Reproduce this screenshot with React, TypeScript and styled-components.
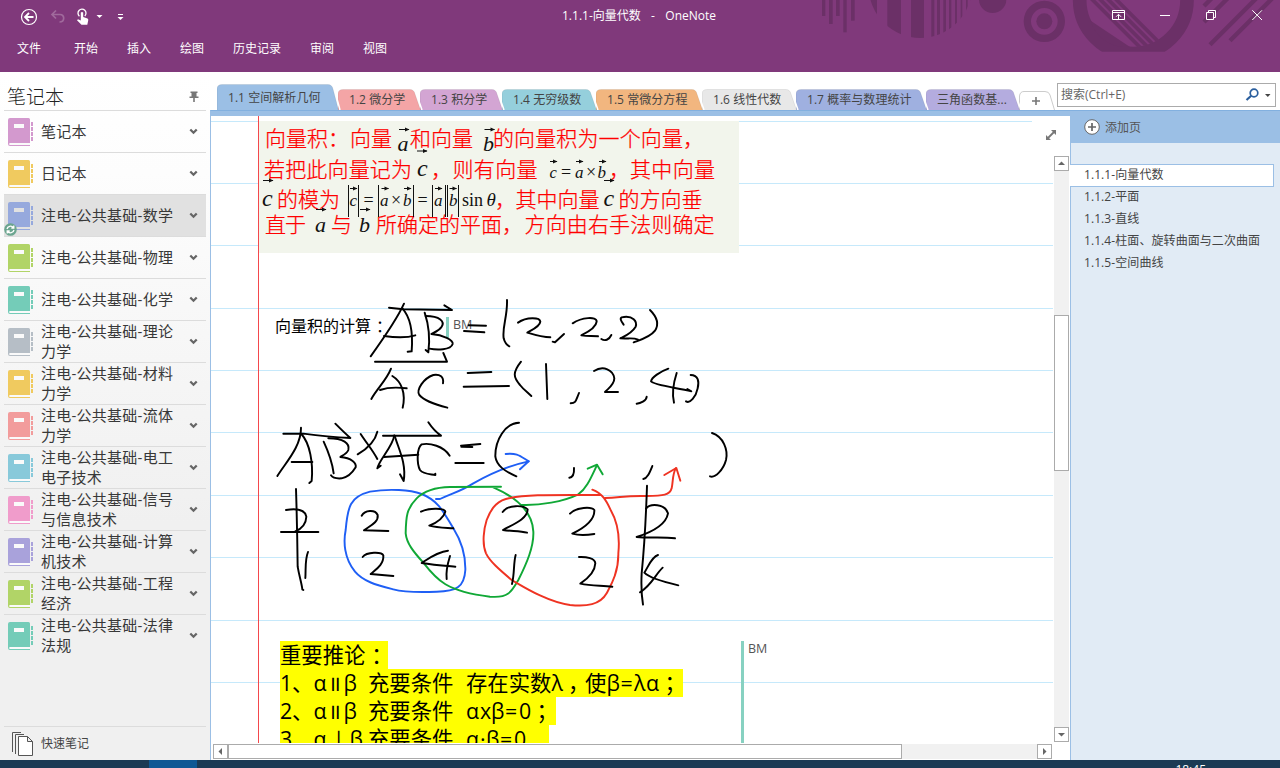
import React from "react";
import styled, { createGlobalStyle } from "styled-components";

const GlobalStyle = createGlobalStyle`
  * { box-sizing: border-box; }
  body { margin: 0; background: #fff; overflow: hidden; }
  body, svg text { font-family: "Open Sans", "Noto Sans CJK SC", sans-serif; }
`;

const BLUE = "#9bbfe5";
const SERIF = '"Liberation Serif", serif';

const Window = styled.div`
  display: flex;
  flex-direction: column;
  width: 1280px;
  height: 768px;
  overflow: hidden;
  background: #fff;
  color: #444;
  font-size: 12px;
`;

/* ---------- title bar ---------- */

const TitleBar = styled.header`
  position: relative;
  flex: none;
  height: 72px;
  background: #80397b;
  color: #fff;
`;

const TitleArt = styled.svg`
  position: absolute;
  left: 800px;
  top: 0;
`;

const TitleRow = styled.div`
  position: relative;
  display: grid;
  grid-template-columns: 1fr auto 1fr;
  align-items: center;
  height: 32px;
  padding: 0 2px 0 0;
`;

const Caption = styled.div`
  font-size: 12px;
  line-height: 16px;
  white-space: pre;
  width: 154px;
  display: flex;
  justify-content: space-between;
  padding-bottom: 1px;
`;

const QuickTools = styled.div`
  display: flex;
`;

const WindowButtons = styled.div`
  display: flex;
  justify-content: flex-end;
  margin-right: 1px;
`;

const RibbonTabs = styled.nav`
  position: relative;
  display: flex;
  gap: 29px;
  padding: 8px 0 0 17px;
  line-height: 18px;
  font-size: 12px;

  span:first-child {
    margin-right: 4px;
  }
`;

/* ---------- body ---------- */

const Body = styled.div`
  display: flex;
  height: 688px;
`;

const Sidebar = styled.aside`
  display: flex;
  flex-direction: column;
  width: 210px;
  padding: 8px 4px 0;
  background: linear-gradient(#fff 0, #fdfdfd 100px, #f0f0f0 450px, #f0f0f0);
`;

const SidebarHead = styled.div`
  display: flex;
  align-items: center;
  justify-content: space-between;
  height: 31px;
  padding: 4px 7px 0 3px;
  border-bottom: 1px solid #dcdcdc;
  font-size: 19px;
  font-weight: 300;
  line-height: 24px;
  color: #222;
`;

const NotebookRow = styled.div<{ $active?: boolean }>`
  display: flex;
  align-items: center;
  position: relative;
  height: 42px;
  width: 202px;
  padding: 0 8px 0 4px;
  border-bottom: 1px solid #dcdcdc;
  background: ${(p) => (p.$active ? "#e1e1e1" : "transparent")};

  &:nth-last-child(2) {
    border-bottom-color: transparent;
  }
`;

const NotebookName = styled.div`
  width: 136px;
  margin: -2px 12px 0 7px;
  font-size: 15px;
  line-height: 20px;
  letter-spacing: 0.25px;
  color: #383838;
`;

const SyncBadge = styled.svg`
  position: absolute;
  left: 0;
  bottom: 0;
`;

const QuickNotes = styled.div`
  display: flex;
  align-items: center;
  gap: 8px;
  height: 34px;
  margin-top: auto;
  padding-left: 8px;
  border-top: 1px solid #dcdcdc;

  span {
    margin-top: -2px;
  }
`;

const Main = styled.section`
  display: flex;
  flex-direction: column;
  width: 1070px;
`;

const TabStrip = styled.div`
  display: flex;
  align-items: flex-end;
  height: 38px;
  padding-left: 7px;
`;

const SectionTabBox = styled.div<{ $w: number; $active?: boolean; $z: number }>`
  position: relative;
  z-index: ${(p) => p.$z};
  width: ${(p) => p.$w}px;
  height: ${(p) => (p.$active ? 26 : 21)}px;
  padding: ${(p) => (p.$active ? "5px 0 0 11px" : "2px 0 0 11px")};
  line-height: 17px;
  letter-spacing: 0.05px;
  color: #444;
  white-space: pre;

  svg {
    position: absolute;
    left: 0;
    bottom: 0;
    z-index: -1;
  }
`;

const SearchBox = styled.div`
  display: flex;
  align-items: center;
  justify-content: space-between;
  width: 219px;
  height: 24px;
  margin: 0 0 3px 2px;
  padding: 0 4px 3px 3px;
  border: 1px solid #ababab;
  color: #666;
`;

const Workspace = styled.div`
  display: flex;
  height: 650px;
  border-top: 1px solid #82b0df;
  border-left: 1px solid ${BLUE};
`;

const Editor = styled.div`
  display: flex;
  flex-direction: column;
  width: 859px;
  border-top: 5px solid ${BLUE};
`;

const EditorTop = styled.div`
  display: flex;
  height: 627px;
`;

const Paper = styled.div`
  position: relative;
  width: 843px;
  overflow: hidden;
  background: #fff;
`;

const PaperArt = styled.svg`
  position: absolute;
  left: 0;
  top: 0;
`;

const ExpandIcon = styled.svg`
  position: absolute;
  z-index: 2;
  left: -9px;
  top: 13px;
`;

const VScroll = styled.div`
  position: relative;
  display: flex;
  flex-direction: column;
  width: 16px;
  padding: 40px 1px 1px 0;
`;

const ScrollButton = styled.div`
  display: flex;
  align-items: center;
  justify-content: center;
  flex: none;
  width: 15px;
  height: 15px;
  border: 1px solid #ababab;
  background: #fff;
`;

const VTrack = styled.div`
  flex: 1;
  padding-top: 144px;
  background: #f1f1f1;
`;

const VThumb = styled.div`
  height: 156px;
  border: 1px solid #ababab;
  background: #fff;
`;

const HScroll = styled.div`
  display: flex;
  height: 15px;
  margin: 1px 18px 0 2px;
`;

const HTrack = styled.div`
  flex: 1;
  background: #f1f1f1;
`;

const HThumb = styled.div`
  width: 675px;
  height: 15px;
  margin-left: -1px;
  border: 1px solid #ababab;
  border-left-width: 2px;
  background: #fff;
`;

/* free-floating note containers on the page */
const NoteBox = styled.div<{ $x: number; $y: number }>`
  position: absolute;
  left: ${(p) => p.$x}px;
  top: ${(p) => p.$y}px;
`;

const NoteTitle = styled.div`
  font-size: 16px;
  line-height: 22px;
  color: #000;
  white-space: pre;
`;

const MarkerLabel = styled.div<{ $h: number }>`
  height: ${(p) => p.$h}px;
  padding-left: 4px;
  border-left: 3px solid #87d1c1;
  font-size: 12.5px;
  line-height: 16px;
  color: #555;
`;

const Highlight = styled.div<{ $w: number }>`
  display: flex;
  width: ${(p) => p.$w}px;
  height: 28px;
  background: #ff0;
  color: #000;
  font-size: 21.33px;
  line-height: 28px;
  white-space: pre;
`;

const Seg = styled.span<{ $w: number }>`
  flex: none;
  width: ${(p) => p.$w}px;
`;

const Mark = styled.span<{ $shift: number }>`
  flex: none;
  width: 21.5px;
  padding-left: ${(p) => p.$shift}px;
`;

const PagePane = styled.div`
  width: 210px;
  border-left: 1px solid ${BLUE};
  background: #e1ebf5;
`;

const AddPage = styled.div`
  display: flex;
  align-items: center;
  gap: 5px;
  height: 32px;
  padding-left: 13px;
  background: ${BLUE};
  color: #555;
`;

const PageList = styled.div`
  padding-top: 21px;
`;

const PageItem = styled.div<{ $active?: boolean }>`
  width: ${(p) => (p.$active ? 204 : 203)}px;
  height: ${(p) => (p.$active ? 23 : 22)}px;
  margin: ${(p) => (p.$active ? "0 0 -1px -1px" : "0")};
  padding-left: ${(p) => (p.$active ? 14 : 13)}px;
  border: ${(p) => (p.$active ? `1px solid ${BLUE}` : "0")};
  border-left: 0;
  background: ${(p) => (p.$active ? "#fff" : "transparent")};
  line-height: ${(p) => (p.$active ? 20 : 22)}px;
  letter-spacing: 0.08px;
  color: #444;
  white-space: nowrap;
`;

const Taskbar = styled.footer`
  display: flex;
  justify-content: space-between;
  height: 8px;
  padding: 0 74px 0 149px;
  overflow: hidden;
  background: #1b3a54;
  color: #fff;
`;

const TaskActive = styled.div`
  width: 48px;
  height: 8px;
  background: #0f5894;
`;

const Clock = styled.div`
  padding-top: 2px;
  font-size: 12px;
  line-height: 15px;
`;

/* ---------- small drawings ---------- */

function BannerArt() {
  const bars: [number, number, number][] = [
    [66, 10, 48], [87, 11, 72], [108, 11, 48], [130, 10, 97], [153, 11, 62],
  ];
  const stripes: [number, number][] = [
    [200, 31], [262, 41], [333, 39], [394, 9], [411, 9], [430, 8], [447, 7], [465, 6], [482, 5], [498, 5], [510, 4],
  ];
  return (
    <TitleArt width="480" height="72" viewBox="0 0 1440 216" fill="#6b3067">
      <defs>
        <clipPath id="disc"><circle cx="361" cy="-41" r="155" /></clipPath>
        <clipPath id="strip"><rect width="1440" height="155" /></clipPath>
        <clipPath id="inner"><circle cx="1000" cy="0" r="141" /></clipPath>
      </defs>
      {bars.map(([x, w, h]) => <rect key={x} x={x} width={w} height={h} />)}
      <g clipPath="url(#disc)">
        {stripes.map(([x, w]) => <rect key={x} x={x} width={w} height="120" />)}
      </g>
      <circle cx="578" cy="-2" r="41" />
      <circle cx="733" cy="64" r="51" fill="none" stroke="#6b3067" strokeWidth="22" />
      <circle cx="733" cy="64" r="24" />
      <g clipPath="url(#strip)">
        <circle cx="1000" cy="0" r="161" fill="none" stroke="#6b3067" strokeWidth="41" />
        <g clipPath="url(#inner)" stroke="#6b3067" strokeWidth="11">
          <path d="M840,-38 L1026,148 M864,-38 L1050,148 M888,-38 L1074,148 M912,-38 L1098,148" />
        </g>
        <path d="M872,62 C885,110 930,145 990,141 Z" />
        <g stroke="#6b3067" strokeWidth="13">
          <path d="M1212,18 L1240,-10 M1212,66 L1290,-12 M1230,134 L1372,-8 M1290,122 L1420,-8" />
        </g>
      </g>
    </TitleArt>
  );
}

const ToolIcons = () => (
  <svg width="130" height="32" viewBox="0 0 130 32" fill="none" stroke="#fff">
    <circle cx="29" cy="17" r="7.5" strokeWidth="1.2" />
    <path d="M33.5 17H25.5M29 13L25 17L29 21" strokeWidth="1.8" />
    <path d="M52 14.5H60C65 14.5 65 22 59.5 22M56 10.5L52 14.5L56 18.5" stroke="#a06a9c" strokeWidth="1.7" />
    <path d="M79.4 16.2A4 4 0 1 1 84.8 16" strokeWidth="1.3" />
    <path d="M80.8 12.5Q82 11.3 83.2 12.5V17L87.5 18.5Q88.6 19 88.2 20.5L87.3 24.8H81.5L77 20.2L78 19.2L80.8 20.5Z" fill="#fff" stroke="none" />
    <path d="M96.5 15H102.5L99.5 18Z" fill="#fff" stroke="none" />
    <path d="M118 14.5H123" />
    <path d="M117.5 17H123.5L120.5 20Z" fill="#fff" stroke="none" />
  </svg>
);

const WindowIcons = () => (
  <svg width="170" height="32" viewBox="1107 0 170 32" fill="none" stroke="#fff">
    <path d="M1112.5 10.5H1124.5V19.5H1112.5ZM1112.5 12.5H1124.5M1118.5 19V14.5M1116 16.8L1118.5 14.3L1121 16.8" />
    <path d="M1160 15.5H1170" />
    <path d="M1206.5 12.5H1213.5V19.5H1206.5ZM1208.5 12V10.5H1215.5V17.5H1214" />
    <path d="M1252.3 10.3L1262 20M1262 10.3L1252.3 20" />
  </svg>
);

const BookIcon = ({ color, hole }: { color: string; hole: string }) => (
  <svg width="26" height="28" viewBox="0 0 26 28">
    <path d="M2 0H20.5Q22 0 22 1.5V25H2.5Q1.5 25 1.5 26Q1.5 27 2.5 27H22V28H2Q0 28 0 26V2Q0 0 2 0Z" fill={color} />
    <rect x="1.5" y="25" width="20.5" height="2" fill={hole} />
    <rect x="6" y="6" width="10" height="4" fill={hole} />
    <path d="M24 4V24" stroke={color} strokeWidth="2" strokeDasharray="4 1" />
  </svg>
);

const Chevron = () => (
  <svg width="9" height="8" viewBox="0 0 9 8">
    <path d="M1.300 1.500L4.500 4.700L7.700 1.500" fill="none" stroke="#666" strokeWidth="2.300" />
  </svg>
);

const PinIcon = () => (
  <svg width="10" height="12" viewBox="0 0 10 12">
    <path d="M1.5 0.5H8.500V2H7.500V5.500H9.500V7H0.500V5.500H2.500V2H1.500Z M4.200 7H5.800V11H4.200Z" fill="#777" />
  </svg>
);

const Arrow = ({ dir }: { dir: "up" | "down" | "left" | "right" }) => {
  const d = { up: "M1 6L4.500 2.500L8 6Z", down: "M1 3L4.500 6.500L8 3Z", left: "M6 1V8L2.500 4.500Z", right: "M3 1V8L6.500 4.500Z" }[dir];
  return <svg width="9" height="9"><path d={d} fill="#666" /></svg>;
};

function SectionTab({ w, color, active, z, children }: { w: number; color: string; active?: boolean; z: number; children: React.ReactNode }) {
  const h = active ? 26 : 21;
  const top = 0.5;
  const shape = `M0,${h} V5 Q0,${top} 5,${top} H${w - 10} Q${w - 6},${top} ${w - 5},5 L${w + 0.5},${h}`;
  return (
    <SectionTabBox $w={w} $active={active} $z={z}>
      <svg width={w + 3} height={h}>
        <path d={`M${w - 8},1 Q${w - 4},1.5 ${w - 3.5},5 L${w + 2},${h}`} fill="none" stroke="#fff" strokeWidth="1.5" />
        <path d={shape} fill={color} />
        <path d={shape} fill="none" stroke="rgba(0,0,0,0.07)" />
      </svg>
      {children}
    </SectionTabBox>
  );
}

/* ---------- pasted lecture slide ---------- */

function Vec({ x, y, ch, ax, ay, size = 22 }: { x: number; y: number; ch: string; ax: number; ay: number; size?: number }) {
  const len = size > 20 ? 10 : 7;
  return (
    <g>
      <text x={x} y={y} fontSize={size} fontStyle="italic" fill="#111" style={{ fontFamily: SERIF }}>{ch}</text>
      <path d={`M${ax},${ay}H${ax + len}`} stroke="#111" />
      <path d={`M${ax + len - 4},${ay - 2}L${ax + len + 0.5},${ay}L${ax + len - 4},${ay + 2}Z`} fill="#111" />
    </g>
  );
}

const slideText: [number, number, string, number][] = [
  [265, 146, "向量积：", 84],
  [350, 146, "向量", 42],
  [410, 146, "和向量", 63],
  [493, 146, "的向量积为一个向量，", 211],
  [264, 177, "若把此向量记为", 148],
  [431, 177, "，", 21],
  [452.5, 177, "则有向量", 85],
  [609, 177, "，", 21],
  [630, 177, "其中向量", 85],
  [277, 207, "的模为", 63],
  [495, 207, "，", 21],
  [515.5, 207, "其中向量", 84],
  [618.5, 207, "的方向垂", 84],
  [265, 232, "直于", 41],
  [331, 232, "与", 21],
  [376, 232, "所确定的平面，", 147],
  [524.5, 232, "方向由右手法则确定", 190],
];

const MathText = styled.text`
  && {
    font-family: ${SERIF};
  }
`;

function Slide() {
  return (
    <g>
      <rect x="259" y="121" width="480" height="132" fill="#f2f5ec" />
      <g fill="#ff0000" fontSize="21" fontWeight="300" stroke="#ff0000" strokeWidth="0.25">
        {slideText.map(([x, y, t, w]) => (
          <text key={`${x}-${y}`} x={x} y={y} textLength={w}>{t}</text>
        ))}
      </g>
      <Vec x={397.5} y={151} ch="a" ax={399} ay={129.5} />
      <Vec x={483} y={151} ch="b" ax={484.5} ay={129.5} />
      <Vec x={417} y={176} ch="c" ax={417} ay={151} size={24} />
      <Vec x={262} y={206} ch="c" ax={263} ay={180.5} size={24} />
      <Vec x={603.5} y={206} ch="c" ax={604} ay={180.5} size={24} />
      <Vec x={315} y={232} ch="a" ax={316} ay={209.5} />
      <Vec x={359} y={232} ch="b" ax={360} ay={209.5} />
      <Vec x={549.5} y={178} ch="c" ax={550} ay={161.5} size={16.5} />
      <Vec x={575} y={178} ch="a" ax={576} ay={161.5} size={17} />
      <Vec x={597.5} y={178} ch="b" ax={599} ay={161.5} size={17} />
      <Vec x={349.5} y={206} ch="c" ax={350} ay={188.5} size={17} />
      <Vec x={380} y={206} ch="a" ax={381.5} ay={188.5} size={17} />
      <Vec x={403} y={206} ch="b" ax={404} ay={188.5} size={17} />
      <Vec x={434} y={206} ch="a" ax={435} ay={188.5} size={17} />
      <Vec x={449} y={206} ch="b" ax={449.5} ay={188.5} size={17} />
      <g fill="#111" fontSize="18">
        <MathText x="561" y="178">=</MathText>
        <MathText x="586" y="178">×</MathText>
        <MathText x="363.5" y="206">=</MathText>
        <MathText x="391" y="206">×</MathText>
        <MathText x="417.5" y="206">=</MathText>
        <MathText x="462" y="206" textLength="21">sin</MathText>
        <MathText x="486.5" y="206" fontStyle="italic" fontSize="19">θ</MathText>
      </g>
      <path d="M348.5,185V217M358.5,185V217M378.5,185V217M413.5,185V217M432.5,185V217M445.5,185V217M447.5,185V217M458.5,185V217" stroke="#111" />
    </g>
  );
}

/* ---------- pen strokes ---------- */

const inkA = [
  "M387,53 L430,58 L576,60 L553,46",
  "M432,41 C410,90 360,160 332,199",
  "M427,55 C450,80 460,120 455,184 L443,185",
  "M372,138 C400,142 440,144 466,136",
  "M494,68 C508,110 510,150 505,187 L497,180",
  "M497,78 C540,78 555,95 545,110 C535,125 520,128 514,132 C550,135 580,150 578,162 C572,181 530,180 508,176",
  "M626,106 L678,107 M612,123 L673,127",
  "M345,215 L561,215 L550,189",
  "M393,236 C380,270 350,297 334,327",
  "M397,258 C425,275 438,310 428,353",
  "M360,300 C380,293 415,292 440,295",
  "M549,280 C552,260 540,252 520,255 C490,265 468,300 478,315 C495,335 530,345 562,353",
  "M70,431 L130,431 C180,438 220,442 271,444 C255,430 240,415 226,401",
  "M123,413 C124,470 75,520 52,558",
  "M124,432 C150,460 160,520 155,573 L148,579",
  "M95,516 L157,516",
  "M191,455 C205,485 217,520 221,550",
  "M205,445 C250,445 270,460 265,480 C260,492 245,498 241,501 C275,503 290,520 287,532 C275,552 262,562 245,565 C232,566 218,564 213,556",
  "M302,432 C320,460 338,480 352,507",
  "M352,425 C345,455 315,480 293,493",
  "M369,437 L543,437 C525,425 515,412 505,397",
  "M403,436 C398,470 357,510 352,535 L362,527",
  "M405,440 C415,475 440,520 431,573 L420,553",
  "M372,501 L475,494",
  "M569,497 C550,468 510,458 485,463 C470,475 470,520 480,540 C490,553 510,552 526,555 L526,551",
  "M603,467 L661,462 M604,470 L637,471 M586,519 L671,519",
];

const inkB = [
  "M201,30 C203,80 186,110 191,145 C194,157 200,165 208,169",
  "M234,98 C260,80 300,82 301,95 C300,110 275,120 262,128 C285,135 310,142 331,142",
  "M372,132 L345,157 L338,155",
  "M398,100 C425,82 470,78 470,95 C468,115 440,128 424,136 C445,139 458,137 474,139",
  "M514,135 C507,150 495,154 484,147",
  "M551,104 C545,95 538,86 545,82 C580,75 592,95 587,110 C575,130 555,138 541,145 C565,147 580,142 594,149",
  "M630,60 C655,85 656,105 645,122 C630,142 600,150 581,157",
  "M83,249 L154,246 M71,290 L207,288",
  "M243,215 C217,248 220,262 240,285 C250,298 260,305 274,318",
  "M318,222 L322,327",
  "M417,309 C407,333 408,340 392,340",
  "M462,243 C490,225 520,240 523,265 C523,285 505,295 495,306 L534,306",
  "M620,320 C620,332 600,340 590,341",
  "M685,236 C660,245 635,262 633,274 C640,285 700,292 754,304 L742,297",
  "M710,249 C700,280 695,310 702,338",
  "M752,255 C775,255 778,275 773,295 C768,320 750,342 738,334",
  "M237,398 C195,400 165,450 166,500 C170,528 195,544 229,559",
  "M816,429 C850,440 865,480 858,510 C850,540 825,565 810,559",
  "M402,534 C403,552 398,562 388,563",
  "M637,528 C628,550 622,565 610,567",
];

const inkC = [
  "M108,57 C110,120 112,200 113,290 C118,320 125,340 127,358 L130,360",
  "M78,120 C110,115 135,118 139,140 C138,165 120,178 106,184",
  "M63,186 L175,186",
  "M144,246 C134,270 138,300 136,324",
  "M305,137 C315,120 345,118 353,135 C357,158 325,170 312,181 L385,183",
  "M308,261 C320,245 365,245 370,256 C372,285 345,300 332,312 L400,318",
  "M483,125 C510,112 555,115 556,125 C550,145 525,160 508,167 C530,173 550,173 580,175",
  "M564,242 C530,245 500,270 485,279 C520,285 550,287 586,290",
  "M570,258 C560,290 558,310 560,327",
];

const inkD = [
  "M128,216 C145,193 190,195 203,208 C203,238 155,255 129,270 C155,274 180,272 201,278",
  "M167,345 C160,370 164,400 156,432",
  "M330,221 C350,200 395,200 403,210 C405,245 360,270 337,281 C360,288 385,285 403,282",
  "M357,351 C380,350 405,355 406,370 C405,395 385,415 361,431 C395,438 425,436 457,440",
  "M561,137 C558,230 553,320 545,400 C543,440 545,470 549,494",
  "M558,206 C570,190 615,190 624,220 C618,255 570,278 530,291 C570,295 605,290 645,295",
  "M594,345 C575,350 565,380 553,398 C570,415 620,428 655,436",
  "M608,383 C585,405 575,435 540,457",
];

const blueInk = [
  "M330,65 C390,55 450,60 485,72 C530,90 545,115 580,175 C605,215 617,255 616,300 C613,350 590,365 530,365 C480,367 430,366 400,358 C350,345 310,335 285,305 C252,265 250,215 257,180 C263,110 270,80 330,65 Z",
  "M528,87 L540,87 C580,68 600,65 640,40 C690,12 740,-12 806,-26",
  "M737,-48 C772,-52 780,-42 806,-26 L780,-2",
];

const greenInk = [
  "M723,50 L570,51 C520,52 490,65 470,85 C440,115 438,140 437,190 C440,220 460,245 490,278 C530,330 560,365 690,380 C745,385 755,365 775,330 C800,280 822,230 820,185 C818,130 775,85 700,52",
  "M785,105 C840,107 910,95 955,73 C980,55 992,25 1011,-15",
  "M983,-4 L1011,-16 L1028,13",
];

const redInk = [
  "M397,149 C430,162 440,185 452,210 C475,250 480,290 475,340 C476,400 450,440 440,460 C420,495 380,500 330,495 C260,485 190,440 155,420 C120,390 90,365 78,340 C65,310 72,265 80,240 C95,200 115,180 150,174 C200,163 280,165 420,165",
  "M435,174 C480,174 490,166 560,168 C610,168 630,165 635,145 C640,120 637,105 647,85",
  "M613,105 L649,84 L661,122",
];

function Ink({ paths, x, y, color = "#000" }: { paths: string[]; x: number; y: number; color?: string }) {
  return (
    <g transform={`translate(${x} ${y}) scale(0.333333)`} fill="none" stroke={color} strokeWidth="5.8" strokeLinecap="round" strokeLinejoin="round">
      {paths.map((d) => <path key={d} d={d} />)}
    </g>
  );
}

/* ---------- data ---------- */

const notebooks: [string, string][] = [
  ["笔记本", "#d399ce"],
  ["日记本", "#f0ca5f"],
  ["注电-公共基础-数学", "#96a9dd"],
  ["注电-公共基础-物理", "#b1d467"],
  ["注电-公共基础-化学", "#74ccb8"],
  ["注电-公共基础-理论力学", "#b6bec6"],
  ["注电-公共基础-材料力学", "#f0ca5f"],
  ["注电-公共基础-流体力学", "#f29c9c"],
  ["注电-公共基础-电工电子技术", "#88c9da"],
  ["注电-公共基础-信号与信息技术", "#f09ccb"],
  ["注电-公共基础-计算机技术", "#a9a2db"],
  ["注电-公共基础-工程经济", "#b1d467"],
  ["注电-公共基础-法律法规", "#74ccb8"],
];

const sections: [string, string, number][] = [
  ["1.1 空间解析几何", BLUE, 121],
  ["1.2 微分学", "#f4a5a6", 82],
  ["1.3 积分学", "#d3a5d3", 82],
  ["1.4 无穷级数", "#95cfdc", 94],
  ["1.5 常微分方程", "#f2b67f", 106],
  ["1.6 线性代数", "#e8e8e8", 94],
  ["1.7 概率与数理统计", "#9fb0e0", 130],
  ["三角函数基...", "#b4acdf", 93],
];

const pages = ["1.1.1-向量代数", "1.1.2-平面", "1.1.3-直线", "1.1.4-柱面、旋转曲面与二次曲面", "1.1.5-空间曲线"];
const ruleLines = [183.5, 245.5, 308.5, 370.5, 432.5, 495.5, 557.5, 620.5, 682.5];

export default function App() {
  return (
    <Window>
      <GlobalStyle />
      <TitleBar>
        <BannerArt />
        <TitleRow>
          <QuickTools><ToolIcons /></QuickTools>
          <Caption><span>1.1.1-向量代数</span><span>-</span><span>OneNote</span></Caption>
          <WindowButtons><WindowIcons /></WindowButtons>
        </TitleRow>
        <RibbonTabs>
          {["文件", "开始", "插入", "绘图", "历史记录", "审阅", "视图"].map((t) => <span key={t}>{t}</span>)}
        </RibbonTabs>
      </TitleBar>

      <Body>
        <Sidebar>
          <SidebarHead>笔记本<PinIcon /></SidebarHead>
          {notebooks.map(([name, color], i) => (
            <NotebookRow key={name} $active={i === 2}>
              <BookIcon color={color} hole={i === 2 ? "#e1e1e1" : "#fafafa"} />
              <NotebookName>{name}</NotebookName>
              <Chevron />
              {i === 2 && (
                <SyncBadge width="13" height="13" viewBox="0 0 13 13">
                  <circle cx="6.5" cy="6.5" r="6.3" fill="#6ba58f" />
                  <path d="M3 6A3.600 3.600 0 0 1 9.300 4.500M10 7A3.600 3.600 0 0 1 3.700 8.500M9.800 2.500V5H7.300M3.200 10.500V8H5.700" fill="none" stroke="#fff" strokeWidth="1.3" />
                </SyncBadge>
              )}
            </NotebookRow>
          ))}
          <QuickNotes>
            <svg width="21" height="24" viewBox="0 0 21 24" fill="none" stroke="#555">
              <path d="M0.500 20V0.500H9M3.500 22V2.500H12" />
              <path d="M6.500 4.500H15.500L20.500 9.500V23.500H6.500ZM15.500 4.500V9.500H20.500" fill="#fff" />
            </svg>
            <span>快速笔记</span>
          </QuickNotes>
        </Sidebar>

        <Main>
          <TabStrip>
            {sections.map(([name, color, w], i) => (
              <SectionTab key={name} w={w} color={color} active={i === 0} z={20 - i}>{name}</SectionTab>
            ))}
            <svg width="36" height="21" viewBox="0 0 36 21" fill="none">
              <path d="M0.500 21V7Q1 2.500 5 2.500H26Q30 2.500 31 6L35.500 21" stroke="#ccc" />
              <path d="M13 12H21M17 8V16" stroke="#777" strokeWidth="1.600" />
            </svg>
            <SearchBox>
              搜索(Ctrl+E)
              <svg width="26" height="14" viewBox="0 0 26 14">
                <circle cx="9" cy="6" r="3.800" fill="none" stroke="#2b5f9e" strokeWidth="1.700" />
                <path d="M6.200 8.800L1.500 13" stroke="#2b5f9e" strokeWidth="2.200" />
                <path d="M20 7H25.500L22.800 10Z" fill="#444" />
              </svg>
            </SearchBox>
          </TabStrip>

          <Workspace>
            <Editor>
              <EditorTop>
                <Paper>
                  <PaperArt width="843" height="627" viewBox="211 116 843 627">
                    <path d="M211,121.500H1032" stroke="#c6e9fb" />
                    <path d={ruleLines.map((y) => `M211,${y}H1053`).join("")} stroke="#c6e9fb" />
                    <Slide />
                    <path d="M258.500,116V743" stroke="#f4484c" />
                  </PaperArt>
                  <NoteBox $x={64} $y={199}>
                    <NoteTitle>向量积的计算<Mark $shift={5}>：</Mark></NoteTitle>
                  </NoteBox>
                  <NoteBox $x={235} $y={201}><MarkerLabel $h={21}>BM</MarkerLabel></NoteBox>
                  <NoteBox $x={69} $y={525}>
                    <Highlight $w={108}>重要推论<Mark $shift={6}>：</Mark></Highlight>
                    <Highlight $w={403}>
                      <Seg $w={12}>1</Seg><Seg $w={21.5}>、</Seg><Seg $w={14.5}>α</Seg><Seg $w={15.5}>॥</Seg><Seg $w={24.5}>β</Seg>
                      <Seg $w={98}>充要条件</Seg><Seg $w={85.5}>存在实数</Seg><Seg $w={12}>λ</Seg>
                      <Mark $shift={4.5}>，</Mark><Seg $w={21.5}>使</Seg><Seg $w={14}>β</Seg><Seg $w={13.5}>=</Seg><Seg $w={12}>λ</Seg><Seg $w={14}>α</Seg><Mark $shift={4.5}>；</Mark>
                    </Highlight>
                    <Highlight $w={276}>
                      <Seg $w={12}>2</Seg><Seg $w={21.5}>、</Seg><Seg $w={14.5}>α</Seg><Seg $w={15.5}>॥</Seg><Seg $w={24.5}>β</Seg>
                      <Seg $w={98}>充要条件</Seg><Seg $w={14}>α</Seg><Seg $w={11}>x</Seg><Seg $w={14}>β</Seg><Seg $w={14}>=</Seg><Seg $w={12}>0</Seg><Mark $shift={5.5}>；</Mark>
                    </Highlight>
                    <Highlight $w={269}>
                      <Seg $w={12}>3</Seg><Seg $w={21.5}>、</Seg><Seg $w={14.5}>α</Seg><Seg $w={21.5}>⊥</Seg><Seg $w={18.5}>β</Seg>
                      <Seg $w={98}>充要条件</Seg><Seg $w={14}>α</Seg><Seg $w={6}>·</Seg><Seg $w={14}>β</Seg><Seg $w={14}>=</Seg><Seg $w={12}>0</Seg>
                    </Highlight>
                  </NoteBox>
                  <NoteBox $x={530} $y={525}><MarkerLabel $h={110}>BM</MarkerLabel></NoteBox>
                  <PaperArt width="843" height="627" viewBox="211 116 843 627">
                    <Ink paths={blueInk} x={260} y={470} color="#1f5ff5" />
                    <Ink paths={greenInk} x={260} y={470} color="#10a836" />
                    <Ink paths={redInk} x={460} y={440} color="#ef3322" />
                    <Ink paths={inkA} x={260} y={290} />
                    <Ink paths={inkB} x={440} y={290} />
                    <Ink paths={inkC} x={260} y={470} />
                    <Ink paths={inkD} x={460} y={440} />
                  </PaperArt>
                </Paper>
                <VScroll>
                  <ExpandIcon width="12" height="12" viewBox="0 0 12 12">
                    <path d="M2 10L10 2" stroke="#777" strokeWidth="1.8" />
                    <path d="M6 1H11V6ZM1 6V11H6Z" fill="#777" />
                  </ExpandIcon>
                  <ScrollButton><Arrow dir="up" /></ScrollButton>
                  <VTrack><VThumb /></VTrack>
                  <ScrollButton><Arrow dir="down" /></ScrollButton>
                </VScroll>
              </EditorTop>
              <HScroll>
                <ScrollButton><Arrow dir="left" /></ScrollButton>
                <HTrack><HThumb /></HTrack>
                <ScrollButton><Arrow dir="right" /></ScrollButton>
              </HScroll>
            </Editor>
            <PagePane>
              <AddPage>
                <svg width="16" height="16" viewBox="0 0 16 16" fill="none" stroke="#666">
                  <circle cx="8" cy="8" r="7.300" fill="#fff" />
                  <path d="M4 8H12M8 4V12" strokeWidth="1.700" />
                </svg>
                添加页
              </AddPage>
              <PageList>
                {pages.map((p, i) => <PageItem key={p} $active={i === 0}>{p}</PageItem>)}
              </PageList>
            </PagePane>
          </Workspace>
        </Main>
      </Body>
      <Taskbar>
        <TaskActive />
        <Clock>18:45</Clock>
      </Taskbar>
    </Window>
  );
}
